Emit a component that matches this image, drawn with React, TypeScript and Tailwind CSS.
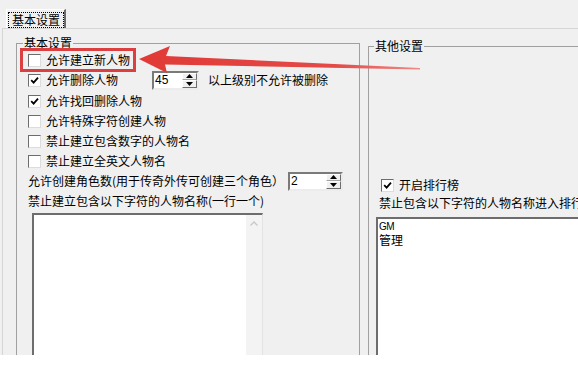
import React from 'react';

function Check({ checked }: { checked?: boolean }) {
  return (
    <span className="w-[13px] h-[13px] shrink-0 bg-white border border-t-[#6d6d6d] border-l-[#6d6d6d] border-r-[#dcdcdc] border-b-[#dcdcdc] flex items-center justify-center">
      {checked && (
        <svg width="9" height="9" viewBox="0 0 9 9">
          <path d="M1.2 4.2 L3.6 6.6 L8 1.6" stroke="#000" strokeWidth="1.8" fill="none" />
        </svg>
      )}
    </span>
  );
}

function Spin({ value, w }: { value: string; w: string }) {
  return (
    <div className={`h-[19px] ${w} bg-white border-2 border-t-[#7a7a7a] border-l-[#7a7a7a] border-r-[#ececec] border-b-[#ececec] flex`}>
      <span className="flex-1 pl-[1px] leading-[15px] text-[12px] font-['Liberation_Sans',sans-serif]">{value}</span>
      <div className="w-[15px] flex flex-col">
        <div className="flex-1 bg-[#f0f0f0] border border-t-white border-l-white border-r-[#6d6d6d] border-b-[#a0a0a0] flex items-center justify-center">
          <svg width="7" height="4" viewBox="0 0 7 4"><path d="M0 4 L3.5 0 L7 4 Z" fill="#000" /></svg>
        </div>
        <div className="flex-1 bg-[#f0f0f0] border border-t-white border-l-white border-r-[#6d6d6d] border-b-[#6d6d6d] flex items-center justify-center">
          <svg width="7" height="4" viewBox="0 0 7 4"><path d="M0 0 L3.5 4 L7 0 Z" fill="#000" /></svg>
        </div>
      </div>
    </div>
  );
}

function Row({ checked, label }: { checked?: boolean; label: string }) {
  return (
    <div className="h-5 flex items-center gap-[5px]">
      <Check checked={checked} />
      <span className="leading-[14px] whitespace-nowrap">{label}</span>
    </div>
  );
}

export default function App() {
  return (
    <div className="relative w-[578px] h-[376px] overflow-hidden bg-white text-[12px] text-black font-['Noto_Sans_CJK_SC',sans-serif]">
      <div className="h-[355px] bg-[#f0f0f0] overflow-hidden flex flex-col">
        {/* Tab strip */}
        <div className="h-[28px] shrink-0 flex items-end pl-[6px]">
          <div className="h-[19px] w-[60px] border-l border-t border-white border-r-2 border-r-[#6b6b6b] flex items-end pl-[1px]">
            <span className="h-[16px] border border-dotted border-black px-[3px] leading-[14px] whitespace-nowrap">基本设置</span>
          </div>
        </div>

        {/* Tab panel */}
        <div className="flex-1 ml-[2px] border-t border-l border-[#d6d6d6] flex gap-[8px] pl-[13px] pt-[7px] overflow-hidden">
          {/* 基本设置 group */}
          <fieldset className="w-[344px] shrink-0 border border-[#a0a0a0] h-[400px]">
            <legend className="ml-[6px] px-[1px] leading-[14px]">基本设置</legend>
            <div className="flex flex-col pl-[11px]">
              <Row label="允许建立新人物" />
              <div className="h-5 flex items-center">
                <div className="w-[124px] flex items-center gap-[5px]">
                  <Check checked />
                  <span className="leading-[14px]">允许删除人物</span>
                </div>
                <Spin value="45" w="w-[47px]" />
                <span className="ml-[9px] leading-[14px] whitespace-nowrap">以上级别不允许被删除</span>
              </div>
              <div className="mt-px">
                <Row checked label="允许找回删除人物" />
              </div>
              <Row label="允许特殊字符创建人物" />
              <Row label="禁止建立包含数字的人物名" />
              <Row label="禁止建立全英文人物名" />
              <div className="h-5 flex items-center">
                <span className="w-[260px] leading-[14px] whitespace-nowrap">允许创建角色数(用于传奇外传可创建三个角色）</span>
                <Spin value="2" w="w-[55px]" />
              </div>
              <div className="h-5 flex items-center">
                <span className="leading-[14px] whitespace-nowrap">禁止建立包含以下字符的人物名称(一行一个)</span>
              </div>
              <div className="mt-[2px] ml-[4px] w-[231px] h-[200px] bg-white border-l-2 border-t-2 border-r border-[#6d6d6d] border-r-[#e3e3e3] flex justify-end">
                <div className="w-[16px] bg-[#f3f3f3] flex justify-center pt-[6px]">
                  <svg width="8" height="5" viewBox="0 0 8 5">
                    <path d="M0.5 4.5 L4 1 L7.5 4.5" stroke="#c8c8c8" strokeWidth="1.3" fill="none" />
                  </svg>
                </div>
              </div>
            </div>
          </fieldset>

          {/* 其他设置 group */}
          <fieldset className="w-[260px] shrink-0 mt-[3px] border border-[#a0a0a0] h-[400px]">
            <legend className="ml-[5px] px-[1px] leading-[14px]">其他设置</legend>
            <div className="flex flex-col">
              <div className="mt-[122px] pl-[12px]">
                <Row checked label="开启排行榜" />
              </div>
              <div className="h-4 flex items-center pl-[10px]">
                <span className="leading-[14px] whitespace-nowrap">禁止包含以下字符的人物名称进入排行榜</span>
              </div>
              <div className="mt-[6px] ml-[7px] h-[200px] bg-white border-l-2 border-t-2 border-[#6d6d6d] pl-[1px] pt-[2px]">
                <div className="text-[10px] leading-[12px] font-['Liberation_Sans',sans-serif] tracking-tighter">GM</div>
                <div className="leading-[14px]">管理</div>
              </div>
            </div>
          </fieldset>
        </div>
      </div>

      {/* Annotation: highlight box and arrow */}
      <div className="absolute left-[20px] top-[48px] w-[116px] h-[24px] border-[3px] border-[#db3f3f]" />
      <svg className="absolute left-0 top-0" width="578" height="376" viewBox="0 0 578 376">
        <defs>
          <linearGradient id="tail" x1="140" y1="0" x2="420" y2="0" gradientUnits="userSpaceOnUse">
            <stop offset="0" stopColor="#e03a36" />
            <stop offset="0.7" stopColor="#e44a47" />
            <stop offset="1" stopColor="#f08a88" />
          </linearGradient>
        </defs>
        <path
          d="M139 59 L170 46 L166 56 L420 68 L420 69.5 L165 64.5 L167 73 Z"
          fill="url(#tail)"
        />
      </svg>
    </div>
  );
}
